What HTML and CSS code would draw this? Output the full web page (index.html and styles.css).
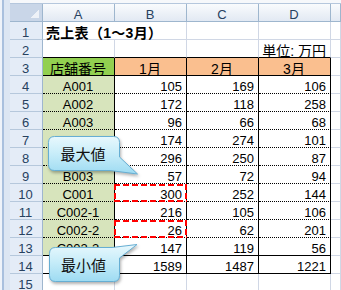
FILE: index.html
```html
<!DOCTYPE html>
<html lang="ja">
<head>
<meta charset="utf-8">
<title>売上表</title>
<link rel="stylesheet" href="styles.css">
</head>
<body>
<div class="frame">
  <div class="sheet">
    <div class="corner"></div>
    <div class="ch">A</div><div class="ch">B</div><div class="ch">C</div><div class="ch">D</div><div class="ch"></div>

    <div class="rh">1</div>
    <div class="c title span2">売上表（1～3月）</div><div class="c"></div><div class="c"></div><div class="c"></div>

    <div class="rh">2</div>
    <div class="c bb"></div><div class="c bb"></div><div class="c bb"></div><div class="c bb num jp">単位: 万円</div><div class="c"></div>

    <div class="rh">3</div>
    <div class="c tb bb green ctr jp">店舗番号</div><div class="c tb bb orange ctr jp">1月</div><div class="c tb bb orange ctr jp">2月</div><div class="c tb bb orange ctr jp">3月</div><div class="c"></div>

    <div class="rh">4</div>
    <div class="c tb bd lg ctr">A001</div><div class="c tb bd num">105</div><div class="c tb bd num">169</div><div class="c tb bd num">106</div><div class="c"></div>

    <div class="rh">5</div>
    <div class="c tb bd lg ctr">A002</div><div class="c tb bd num">172</div><div class="c tb bd num">118</div><div class="c tb bd num">258</div><div class="c"></div>

    <div class="rh">6</div>
    <div class="c tb bd lg ctr">A003</div><div class="c tb bd num">96</div><div class="c tb bd num">66</div><div class="c tb bd num">68</div><div class="c"></div>

    <div class="rh">7</div>
    <div class="c tb bd lg ctr"></div><div class="c tb bd num">174</div><div class="c tb bd num">274</div><div class="c tb bd num">101</div><div class="c"></div>

    <div class="rh">8</div>
    <div class="c tb bd lg ctr"></div><div class="c tb bd num">296</div><div class="c tb bd num">250</div><div class="c tb bd num">87</div><div class="c"></div>

    <div class="rh">9</div>
    <div class="c tb bd lg ctr">B003</div><div class="c tb bd num">57</div><div class="c tb bd num">72</div><div class="c tb bd num">94</div><div class="c"></div>

    <div class="rh">10</div>
    <div class="c tb bd lg ctr">C001</div><div class="c tb bd num mark">300</div><div class="c tb bd num">252</div><div class="c tb bd num">144</div><div class="c"></div>

    <div class="rh">11</div>
    <div class="c tb bd lg ctr">C002-1</div><div class="c tb bd num">216</div><div class="c tb bd num">105</div><div class="c tb bd num">106</div><div class="c"></div>

    <div class="rh">12</div>
    <div class="c tb bd lg ctr">C002-2</div><div class="c tb bd num mark">26</div><div class="c tb bd num">62</div><div class="c tb bd num">201</div><div class="c"></div>

    <div class="rh">13</div>
    <div class="c tb bb lg ctr">C002-3</div><div class="c tb bb num">147</div><div class="c tb bb num">119</div><div class="c tb bb num">56</div><div class="c"></div>

    <div class="rh">14</div>
    <div class="c tb bb"></div><div class="c tb bb num">1589</div><div class="c tb bb num">1487</div><div class="c tb bb num">1221</div><div class="c"></div>

    <div class="rh">15</div>
    <div class="c"></div><div class="c"></div><div class="c"></div><div class="c"></div><div class="c"></div>
  </div>

  <div class="callout callout-max">
    <svg class="bubble" width="72" height="35" viewBox="0 0 72 35">
      <defs>
        <linearGradient id="gmax" x1="0" y1="0" x2="0" y2="1">
          <stop offset="0" stop-color="#e8f8fd"/>
          <stop offset="0.45" stop-color="#c8edf9"/>
          <stop offset="1" stop-color="#9ddbf2"/>
        </linearGradient>
      </defs>
      <path d="M6.5,0.5 H65.5 Q71.5,0.5 71.5,6.5 V21 L89.5,38 L62,34.5 H6.5 Q0.5,34.5 0.5,28.5 V6.5 Q0.5,0.5 6.5,0.5 Z" fill="url(#gmax)" stroke="#66aed3"/>
    </svg>
    <span class="callout-text">最大値</span>
  </div>

  <div class="callout callout-min">
    <svg class="bubble" width="71" height="35" viewBox="0 0 71 35">
      <defs>
        <linearGradient id="gmin" x1="0" y1="0" x2="0" y2="1">
          <stop offset="0" stop-color="#e8f8fd"/>
          <stop offset="0.45" stop-color="#c8edf9"/>
          <stop offset="1" stop-color="#9ddbf2"/>
        </linearGradient>
      </defs>
      <path d="M6.5,0.5 H63 L88,-2.5 L70.5,11 V28.5 Q70.5,34.5 64.5,34.5 H6.5 Q0.5,34.5 0.5,28.5 V6.5 Q0.5,0.5 6.5,0.5 Z" fill="url(#gmin)" stroke="#66aed3"/>
    </svg>
    <span class="callout-text">最小値</span>
  </div>
</div>
</body>
</html>
```

FILE: styles.css
```css
html, body {
  margin: 0;
  padding: 0;
  background: #ffffff;
}

.frame {
  position: relative;
  width: 341px;
  height: 290px;
  overflow: hidden;
  box-sizing: border-box;
  padding: 3px 0 0 10px;
  background:
    linear-gradient(to right, #eef3fa 0, #eef3fa 2px, #a9c0de 2px, #a9c0de 4px, #dce6f3 4px, #dce6f3 10px, transparent 10px),
    #f6f8fb;
}

.sheet {
  display: grid;
  grid-template-columns: 33px 72px 72px 72px 72px 1fr;
  grid-auto-rows: 18px;
  border-top: 1px solid #b5c7dd;
  background: #ffffff;
  font-family: "Liberation Sans", "Noto Sans CJK JP", sans-serif;
  font-size: 13px;
  color: #000000;
}

.sheet > div {
  box-sizing: border-box;
  white-space: nowrap;
  line-height: 14px;
  padding: 4px 4px 0 3px;
}

.corner {
  background:
    linear-gradient(135deg, transparent 50%, #eef2f8 50%) right 3px bottom 3px / 8px 8px no-repeat,
    #c9d6e8;
  border-right: 1px solid #9eb6ce;
  border-bottom: 1px solid #9eb6ce;
}

.ch {
  background: linear-gradient(#f9fbfd, #e2e9f3);
  border-right: 1px solid #9eb6ce;
  border-bottom: 1px solid #9eb6ce;
  text-align: center;
  color: #27415f;
  font-size: 13px;
}

.rh {
  background: #e4ecf7;
  border-right: 1px solid #9eb6ce;
  border-bottom: 1px solid #b6c8dc;
  text-align: center;
  color: #27415f;
}

.c {
  border-right: 1px solid #d0d7e5;
  border-bottom: 1px solid #d0d7e5;
}

.span2 {
  grid-column: span 2;
}

.title {
  font-size: 14px;
  font-weight: bold;
  letter-spacing: 0.3px;
}

.jp {
  font-size: 14px;
}

.tb {
  border-right-color: #000000;
}

.bb {
  border-bottom: 1px solid #000000;
}

.bd {
  border-bottom: 1px dotted #000000;
}

.green {
  background: #92d050;
}

.orange {
  background: #fabf8f;
}

.lg {
  background: #d7e4bc;
}

.ctr {
  text-align: center;
}

.num {
  text-align: right;
}

.mark {
  position: relative;
}

.mark::after {
  content: "";
  position: absolute;
  left: -1px;
  top: 0;
  right: -1px;
  bottom: -1px;
  background:
    repeating-linear-gradient(to right, #ff0000 0, #ff0000 6px, transparent 6px, transparent 9px) left top / 100% 2px no-repeat,
    repeating-linear-gradient(to right, #ff0000 0, #ff0000 6px, transparent 6px, transparent 9px) left bottom / 100% 2px no-repeat,
    repeating-linear-gradient(to bottom, #ff0000 0, #ff0000 6px, transparent 6px, transparent 9px) left top / 2px 100% no-repeat,
    repeating-linear-gradient(to bottom, #ff0000 0, #ff0000 6px, transparent 6px, transparent 9px) right top / 2px 100% no-repeat;
}

.callout {
  position: absolute;
  width: 72px;
  height: 35px;
}

.callout-max {
  left: 48px;
  top: 136px;
}

.callout-min {
  left: 49px;
  top: 247px;
  width: 71px;
}

.bubble {
  position: absolute;
  left: 0;
  top: 0;
  overflow: visible;
  filter: drop-shadow(1px 2px 1.5px rgba(0, 0, 0, 0.3));
}

.callout-text {
  position: relative;
  display: block;
  padding-right: 2px;
  text-align: center;
  font-family: "Noto Sans CJK JP", sans-serif;
  font-size: 15px;
  line-height: 36px;
  color: #111111;
}
```
